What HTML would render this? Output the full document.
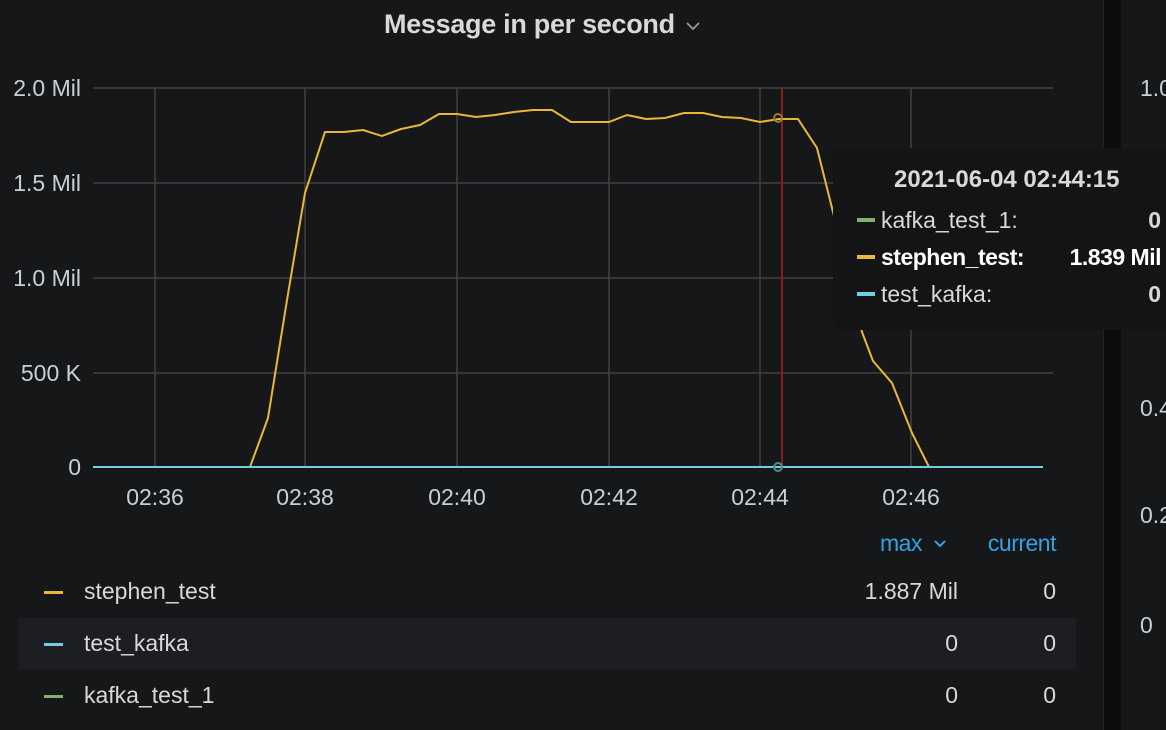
<!DOCTYPE html>
<html><head><meta charset="utf-8"><style>
body{margin:0;width:1166px;height:730px;background:#161719;overflow:hidden;font-family:"Liberation Sans",sans-serif;position:relative}
.t{position:absolute;white-space:nowrap}
.r{position:absolute;white-space:nowrap;text-align:right}
</style></head><body>
<div style="position:absolute;left:1103px;top:0;width:17px;height:730px;background:#0c0d0f;border-left:1px solid #222327"></div>
<div class="t" style="left:384px;top:9px;font-size:27px;font-weight:bold;color:#d8d9da;letter-spacing:-0.3px">Message in per second</div>
<svg width="1166" height="730" style="position:absolute;left:0;top:0">
<path d="M687 23 l6 6 l6 -6" fill="none" stroke="#9a9a9a" stroke-width="1.8"/>
<g stroke="#404145" stroke-width="1.5">
<line x1="93" y1="88" x2="1053" y2="88"/><line x1="93" y1="183" x2="1053" y2="183"/><line x1="93" y1="278" x2="1053" y2="278"/><line x1="93" y1="373" x2="1053" y2="373"/>
<line x1="155" y1="88" x2="155" y2="467"/><line x1="305" y1="88" x2="305" y2="467"/><line x1="457" y1="88" x2="457" y2="467"/><line x1="609" y1="88" x2="609" y2="467"/><line x1="760" y1="88" x2="760" y2="467"/><line x1="911" y1="88" x2="911" y2="467"/>
</g>
<line x1="782" y1="88" x2="782" y2="467" stroke="#8a1f17" stroke-width="2"/>
<polyline fill="none" stroke="#eab839" stroke-width="2" points="93,467 250,467 268,418 287,300 305,193 325,132 344,132 363,130 382,136 401,129 420,125 439,114 457,114 476,117 495,115 514,112 533,110 552,110 571,122 609,122 627,115 646,119 665,118 684,113 703,113 722,117 741,118 760,122 779,119 798,119 817,148 840,240 862,332 873,361 892,383 912,433 929,467 1043,467"/>
<line x1="93" y1="467" x2="1043" y2="467" stroke="#6ed0e0" stroke-width="2"/>
<circle cx="778" cy="118" r="4" fill="none" stroke="#9a7a2c" stroke-width="2"/>
<circle cx="778" cy="467" r="4" fill="none" stroke="#4e8a90" stroke-width="2"/>
<g fill="#c7d0d9" font-size="23" font-family="Liberation Sans">
<text x="81" y="96" text-anchor="end">2.0 Mil</text><text x="81" y="191" text-anchor="end">1.5 Mil</text><text x="81" y="286" text-anchor="end">1.0 Mil</text><text x="81" y="381" text-anchor="end">500 K</text><text x="81" y="475" text-anchor="end">0</text>
<text x="155" y="505" text-anchor="middle">02:36</text><text x="305" y="505" text-anchor="middle">02:38</text><text x="457" y="505" text-anchor="middle">02:40</text><text x="609" y="505" text-anchor="middle">02:42</text><text x="760" y="505" text-anchor="middle">02:44</text><text x="911" y="505" text-anchor="middle">02:46</text>
<text x="1140" y="96">1.0</text><text x="1140" y="416">0.4</text><text x="1140" y="523">0.2</text><text x="1140" y="633">0</text>
</g>
</svg>
<div style="position:absolute;left:833px;top:148px;width:340px;height:182px;background:#141416;border-radius:6px"></div>
<div class="t" style="left:894px;top:166px;font-size:24px;font-weight:bold;color:#d8d9da">2021-06-04 02:44:15</div>
<div style="position:absolute;left:857px;top:218px;width:18px;height:4px;background:#7eb26d"></div>
<div class="t" style="left:881px;top:207px;font-size:23px;color:#d8d9da">kafka_test_1:</div>
<div class="r" style="right:5px;top:207px;font-size:23px;color:#d8d9da;font-weight:bold">0</div>
<div style="position:absolute;left:857px;top:255px;width:18px;height:4px;background:#eab839"></div>
<div class="t" style="left:881px;top:244px;font-size:23px;color:#fff;font-weight:bold;letter-spacing:-0.5px">stephen_test:</div>
<div class="r" style="right:5px;top:244px;font-size:23px;color:#fff;font-weight:bold;letter-spacing:-0.5px">1.839 Mil</div>
<div style="position:absolute;left:857px;top:292px;width:18px;height:4px;background:#6ed0e0"></div>
<div class="t" style="left:881px;top:281px;font-size:23px;color:#d8d9da">test_kafka:</div>
<div class="r" style="right:5px;top:281px;font-size:23px;color:#d8d9da;font-weight:bold">0</div>
<div class="t" style="left:880px;top:530px;font-size:23px;color:#33a2e5;letter-spacing:-0.5px">max</div>
<svg width="20" height="20" style="position:absolute;left:932px;top:536px"><path d="M3 5 l5 5 l5 -5" fill="none" stroke="#33a2e5" stroke-width="2"/></svg>
<div class="r" style="right:110px;top:530px;font-size:23px;color:#33a2e5;letter-spacing:-0.5px">current</div>
<div style="position:absolute;left:18px;top:618px;width:1058px;height:51px;background:#1d1e22"></div>
<div style="position:absolute;left:44px;top:591px;width:19px;height:3px;background:#eab839"></div>
<div class="t" style="left:84px;top:578px;font-size:23px;color:#d8d9da">stephen_test</div>
<div class="r" style="right:208px;top:578px;font-size:23px;color:#d8d9da">1.887 Mil</div>
<div class="r" style="right:110px;top:578px;font-size:23px;color:#d8d9da">0</div>
<div style="position:absolute;left:44px;top:643px;width:19px;height:3px;background:#6ed0e0"></div>
<div class="t" style="left:84px;top:630px;font-size:23px;color:#d8d9da">test_kafka</div>
<div class="r" style="right:208px;top:630px;font-size:23px;color:#d8d9da">0</div>
<div class="r" style="right:110px;top:630px;font-size:23px;color:#d8d9da">0</div>
<div style="position:absolute;left:44px;top:695px;width:19px;height:3px;background:#7eb26d"></div>
<div class="t" style="left:84px;top:682px;font-size:23px;color:#d8d9da">kafka_test_1</div>
<div class="r" style="right:208px;top:682px;font-size:23px;color:#d8d9da">0</div>
<div class="r" style="right:110px;top:682px;font-size:23px;color:#d8d9da">0</div>
</body></html>
